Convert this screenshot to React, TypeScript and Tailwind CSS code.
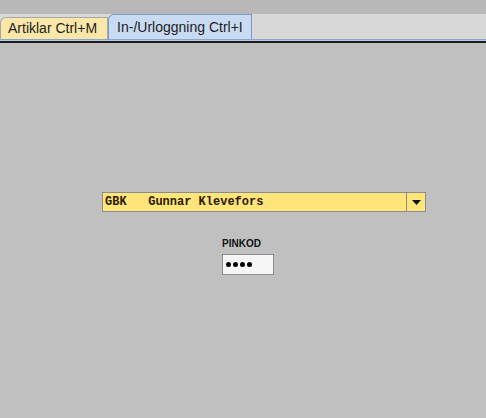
import React from "react"

function Tab({ label, active }: { label: string; active?: boolean }) {
	if (active) {
		return (
			<div className="h-[25px] self-end flex items-center pl-[8px] pr-[8px] bg-[#c8dbf2] border border-b-0 border-[#7a9cc8] rounded-tl-[6px] text-[14px] text-[#222]">
				{label}
			</div>
		)
	}
	return (
		<div className="h-[22px] self-end flex items-center pl-[7px] pr-[10px] bg-[#fbe8a8] border border-b-0 border-[#a8a8a8] rounded-tl-[6px] text-[14px] text-[#222]">
			{label}
		</div>
	)
}

export default function App() {
	return (
		<div className="w-[486px] h-[418px] bg-[#c0c0c0] flex flex-col font-['Liberation_Sans',Arial,sans-serif] overflow-hidden">
			<div className="h-[14px] bg-[#b8b8b8]" />
			<div className="h-[25px] bg-[#d8d8d8] flex items-end">
				<Tab label="Artiklar Ctrl+M" />
				<Tab label="In-/Urloggning Ctrl+I" active />
			</div>
			<div className="h-[2px] bg-[#b8cce6] border-t border-[#8aa6cc]" />
			<div className="h-[2px] bg-[#1a1a1a]" />
			<div className="flex-1 flex flex-col">
				<div className="mt-[149px] ml-[102px] w-[324px] h-[20px] flex border border-[#8c8c8c] bg-[#ffe57a]">
					<div className="flex-1 flex items-center pl-[2px] font-['Liberation_Mono','Courier_New',monospace] font-bold text-[12px] text-[#2a1a00] whitespace-pre">
						GBK   Gunnar Klevefors
					</div>
					<div className="w-[19px] flex items-center justify-center border-l border-[#8c8c8c]">
						<svg width="9" height="5" viewBox="0 0 9 5">
							<path d="M0 0h9L4.5 5z" fill="#111" />
						</svg>
					</div>
				</div>
				<div className="mt-[26px] ml-[222px] text-[10px] font-bold text-[#111] leading-[12px]">PINKOD</div>
				<div className="mt-[4px] ml-[222px] w-[52px] h-[21px] bg-[#f6f6f6] border border-[#8c8c8c] flex items-center pl-[3px] gap-[2px]">
					{[0, 1, 2, 3].map((i) => (
						<span key={i} className="w-[5px] h-[5px] rounded-full bg-black" />
					))}
				</div>
			</div>
		</div>
	)
}
